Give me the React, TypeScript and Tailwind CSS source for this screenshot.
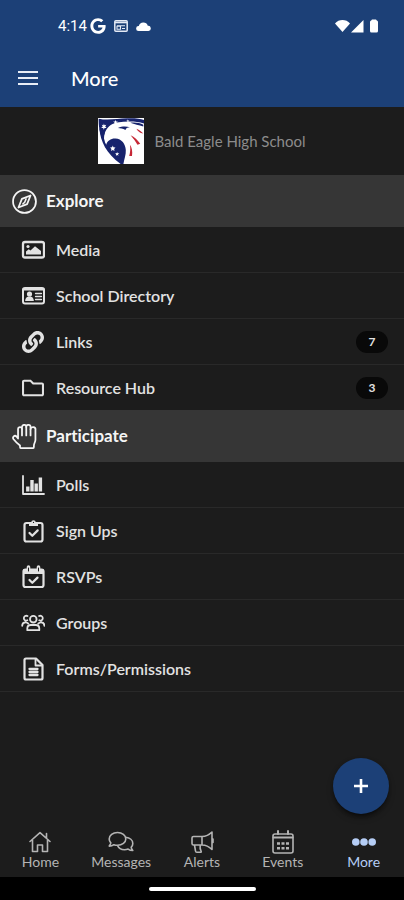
import type { ReactNode } from "react";
import { FaGoogle, FaLink, FaRegFolder } from "react-icons/fa";

type Item = { label: string; icon: ReactNode; count?: number };

function Icon({ size = "w-6 h-6", width = 2, children }: { size?: string; width?: number; children: ReactNode }) {
  return (
    <svg viewBox="0 0 24 24" className={`${size} shrink-0`} fill="none" stroke="currentColor" strokeWidth={width} strokeLinecap="round" strokeLinejoin="round" aria-hidden="true">
      {children}
    </svg>
  );
}

const EXPLORE: Item[] = [
  {
    label: "Media",
    icon: (
      <Icon width={2.3}>
        <rect x="2" y="4" width="21" height="15.5" rx="2" />
        <circle cx="7" cy="8.5" r="1.6" fill="currentColor" stroke="none" />
        <path d="M5 16.500v-3l2.700-2.300 1.800 1.300L14 8.200l6 4.800v3.500z" fill="currentColor" stroke="none" />
      </Icon>
    ),
  },
  {
    label: "School Directory",
    icon: (
      <Icon>
        <rect x="2" y="4" width="21" height="15.5" rx="2" />
        <path d="M2 5.5h21" />
        <circle cx="8.5" cy="10" r="2.6" fill="currentColor" stroke="none" />
        <path d="M4.200 17c0-3.300 1.900-4.500 4.300-4.500s4.300 1.200 4.300 4.500z" fill="currentColor" stroke="none" />
        <path d="M14.5 9.5h6M14.5 12.5h6M14.5 15.5h6" strokeWidth="1.3" />
      </Icon>
    ),
  },
  { label: "Links", icon: <FaLink className="w-6 h-[22px] shrink-0" />, count: 7 },
  { label: "Resource Hub", icon: <FaRegFolder className="w-6 h-[22px] shrink-0" />, count: 3 },
];

const PARTICIPATE: Item[] = [
  {
    label: "Polls",
    icon: (
      <Icon>
        <path d="M2 3v18h21" strokeWidth="1.8" />
        <path d="M6.800 18.500v-5M11 18.500V7M15.200 18.500v-8M19.400 18.500V4.500" strokeWidth="3.400" strokeLinecap="butt" />
      </Icon>
    ),
  },
  {
    label: "Sign Ups",
    icon: (
      <Icon width={2.2}>
        <rect x="3.5" y="4" width="18" height="18.5" rx="2" />
        <path d="M8 7V4.2h2.2a2.3 2.3 0 0 1 4.6 0H17V7z" fill="currentColor" stroke="none" />
        <circle cx="12.5" cy="3.4" r="1.4" fill="#1c1c1c" strokeWidth="1.6" />
        <path d="m8.5 14 2.8 2.8 5.4-5.4" />
      </Icon>
    ),
  },
  {
    label: "RSVPs",
    icon: (
      <Icon width={2.2}>
        <rect x="2.5" y="4.5" width="20" height="17.5" rx="2" />
        <path d="M2.5 4h20v5h-20z" fill="currentColor" stroke="none" />
        <path d="M7.500 2v3.500M17.500 2v3.500" strokeWidth="3.6" />
        <path d="M7.500 3v3M17.500 3v3" stroke="#1c1c1c" strokeWidth="1" />
        <path d="m8.500 15 2.8 2.8 5.2-5.2" />
      </Icon>
    ),
  },
  {
    label: "Groups",
    icon: (
      <Icon width={1.8}>
        <circle cx="12.3" cy="8.2" r="3.3" />
        <path d="M6.3 19.2v-1.7c0-2.3 1.6-3.5 3.5-3.5h5c2 0 3.5 1.2 3.5 3.5v1.7z" />
        <path d="M6.3 9.3a2.4 2.4 0 1 1 .2-4.2M18.3 9.3a2.4 2.4 0 1 0-.2-4.2M1.2 14.8c0-2.4 1.2-3.4 3.3-3.4 1.3 0 2.2.4 2.8 1.2M23.4 14.8c0-2.4-1.2-3.4-3.3-3.4-1.3 0-2.2.4-2.8 1.2" />
      </Icon>
    ),
  },
  {
    label: "Forms/Permissions",
    icon: (
      <Icon width={2.2}>
        <path d="M3.500 3c0-1 .5-1.500 1.500-1.500H15l6.500 6.500v13c0 1-.5 1.500-1.500 1.500H5c-1 0-1.500-.5-1.500-1.500z" />
        <path d="M14.5 2v6.500H21" strokeWidth="1.8" />
        <path d="M8.500 12h8M8.500 15h8M8.500 18h8" strokeWidth="2.3" />
      </Icon>
    ),
  },
];

const TABS: Item[] = [
  {
    label: "Home",
    icon: (
      <Icon width={1.6}>
        <path d="m2 11.5 10-8.8 10 8.8M4.5 10v11.5h5V15h5v6.5h5V10M18.5 8V3.5" />
      </Icon>
    ),
  },
  {
    label: "Messages",
    icon: (
      <svg viewBox="0 0 28 24" className="w-7 h-6" fill="none" stroke="currentColor" strokeWidth="1.6" strokeLinejoin="round" aria-hidden="true">
        <path d="M10.500 2.500c4.700 0 8.300 2.900 8.300 6.400s-3.600 6.400-8.300 6.400c-1.300 0-2.500-.2-3.600-.6-1.100.8-2.700 1.400-4.700 1.400.9-1 1.500-2.200 1.600-3.200-1-1.100-1.600-2.500-1.600-4 0-3.500 3.600-6.400 8.300-6.400z" />
        <path d="M18.800 7.200c4 .5 7 3 7 6.200 0 1.500-.6 2.800-1.600 3.900.1 1 .7 2.200 1.600 3.200-2 0-3.600-.6-4.700-1.400-1.100.4-2.300.6-3.600.6-3.200 0-5.900-1.600-7-4.200" />
      </svg>
    ),
  },
  {
    label: "Alerts",
    icon: (
      <Icon width={1.6}>
        <path d="M12 6.500H3.500A1.500 1.500 0 0 0 2 8v5.500A1.500 1.500 0 0 0 3.500 15H12M12 6.500V15M12 6.500c4 0 7-1.500 10-4.500v17.500C19 16.500 16 15 12 15M4.500 15l1 6c.1.800.6 1.300 1.300 1.300h3.600c.8 0 1.100-.7.600-1.500-.8-1.300-1.200-2.800-.8-5.800M23 9v3.500" />
      </Icon>
    ),
  },
  {
    label: "Events",
    icon: (
      <Icon width={1.6}>
        <rect x="2" y="4" width="20" height="19" rx="2" />
        <path d="M2.500 7.500h19M7 1v3M17 1v3" strokeWidth="2" />
        <path d="M6 13.500h3M10.500 13.500h3M15 13.500h3M6 18.200h3M10.500 18.200h3M15 18.200h3" strokeWidth="2.600" strokeLinecap="butt" />
      </Icon>
    ),
  },
  {
    label: "More",
    icon: (
      <Icon>
        <g fill="currentColor" stroke="none">
          <circle cx="3.800" cy="12" r="3.800" />
          <circle cx="12" cy="12" r="3.800" />
          <circle cx="20.200" cy="12" r="3.800" />
        </g>
      </Icon>
    ),
  },
];

function StatusBar() {
  return (
    <div className="h-[52px] pl-[58px] pr-[22px] flex items-center justify-between">
      <div className="flex items-center gap-2">
        <div className="flex items-center gap-[3px]">
          <span className="font-['Roboto'] text-[15px]">4:14</span>
          <FaGoogle className="w-4 h-4" />
        </div>
        <svg viewBox="0 0 14 12" className="w-3.5 h-3" aria-hidden="true">
          <rect x="0.800" y="0.800" width="12.400" height="10.400" rx="1" fill="none" stroke="#e4eaf5" strokeWidth="1.500" />
          <path d="M1 2.500h12" stroke="#e4eaf5" strokeWidth="1.600" />
          <path d="M3 5.800h8M3 6.200h3.500v3H3zM8 8.500h3" stroke="#e4eaf5" strokeWidth="1.100" fill="none" />
        </svg>
        <svg viewBox="0 0 15 9" className="w-[15px] h-[9px]" aria-hidden="true">
          <path d="M2.500 9a2.500 2.500 0 0 1 .3-5 4.700 4.700 0 0 1 9-.2A2.600 2.600 0 0 1 12.500 9z" fill="#fff" />
        </svg>
      </div>
      <svg viewBox="0 0 48 14" className="w-12 h-3.5" fill="#fff" aria-hidden="true">
        <path d="M1 4.500C4.800-.1 12.200-.1 16 4.500L8.500 13z" />
        <path d="M17 13.500 29.500 1v12.500z" />
        <path d="M36 3q0-1.200 1.200-1.500L38 .6h4l.8.900Q44 1.800 44 3v9q0 1.500-1.500 1.500h-5Q36 13.500 36 12z" />
      </svg>
    </div>
  );
}

function SchoolLogo() {
  return (
    <svg viewBox="0 0 134 134" className="w-[46px] h-[46px]" role="img" aria-label="Bald Eagle High School logo">
      <path d="M0 0h134v134H0z" fill="#fff" />
      <path d="M2 2C34 9 62-1 94 1c18 0 30 2 40 5v10C108 8 82 10 55 13 36 17 26 29 20 43c-5 12-2 25 2 35C7 58 1 27 2 2z" fill="#17236d" />
      <path d="M58 29c13-6 25-5 35-2-8 1-12 3-13 8-8-5-14-5-22-6zM94 14c14-2 28 0 38 6v5c-13-5-26-6-38-11z" fill="#17236d" />
      <path d="M4 30c3 38 20 74 62 104h8c2-14 8-27 7-41-1-17-12-32-30-33-12-1-24 6-27 18C16 66 16 54 20 42z" fill="#17236d" />
      <path d="M95 50c11 5 21 14 28 25l-8 3C110 68 103 60 95 50zM112 31c9 4 15 8 20 14l-7-1c-5-3-10-7-13-13zM93 78c6 8 8 20 6 33h-8c3-11 4-22 2-33z" fill="#c62735" />
      <g fill="#fff">
        <path d="m17 16 2 5 5-1-3 5 4 4-6 0-2 5-2-5-6 0 5-4-3-5 5 1zM51 6l2 4h5l-4 3 1 4-4-2-4 2 1-4-4-3h5zM87 4l1 3h4l-3 2 1 3-3-2-3 2 1-3-3-2h4z" />
        <path d="m43 80 2 5 6 1-4 4 1 6-5-3-5 3 1-6-4-4 6-1zM56 99l1 4h5l-4 3 2 4-4-2-4 2 1-4-3-3h4z" />
      </g>
    </svg>
  );
}

function Section({ title, icon, items }: { title: string; icon: ReactNode; items: Item[] }) {
  return (
    <section>
      <h2 className="h-[52px] px-3 flex items-center gap-[9px] bg-[#363636] text-[17px] font-bold text-[#f5f5f5]">
        {icon}
        {title}
      </h2>
      <ul className="divide-y divide-[#292929]">
        {items.map((item) => (
          <li key={item.label}>
            <a href="#" className="h-[45px] pl-[21px] pr-4 flex items-center gap-[11px] text-[16px] font-semibold text-[#e2e2e2]">
              {item.icon}
              <span className="flex-1">{item.label}</span>
              {item.count && (
                <span className="w-8 h-[22px] rounded-full bg-[#090909] flex items-center justify-center text-[12px] font-bold">
                  {item.count}
                </span>
              )}
            </a>
          </li>
        ))}
      </ul>
    </section>
  );
}

export default function App() {
  return (
    <div className="min-h-screen flex flex-col bg-[#1c1c1c] font-['Lato',sans-serif] [font-variant-ligatures:none]">
      <header className="pb-1 bg-[#1c4077] text-white">
        <StatusBar />
        <div className="h-[51px] px-[18px] flex items-center gap-[33px]">
          <button type="button" aria-label="Open menu">
            <svg viewBox="0 0 20 14" className="w-5 h-3.5" stroke="#e8edf6" strokeWidth="2" aria-hidden="true">
              <path d="M0 1h20M0 7h20M0 13h20" />
            </svg>
          </button>
          <h1 className="text-[20px] font-medium">More</h1>
        </div>
      </header>

      <main className="flex-1">
        <div className="h-[68px] flex items-center justify-center gap-[10px] text-[15px] text-[#8c8c8c]">
          <SchoolLogo />
          Bald Eagle High School
        </div>

        <Section
          title="Explore"
          items={EXPLORE}
          icon={
            <Icon size="w-[25px] h-[25px]" width={1.7}>
              <circle cx="12" cy="12" r="11" />
              <path d="m17.800 6.200-3.300 8.300-8.300 3.300 3.300-8.300z" />
              <path d="m13.500 9.500-1.300 3.200-1.700 1.600" strokeWidth="1.500" />
            </Icon>
          }
        />
        <Section
          title="Participate"
          items={PARTICIPATE}
          icon={
            <Icon size="w-[25px] h-[25px]" width={1.7}>
              <path d="M5.800 14V5.200a1.900 1.900 0 0 1 3.800-.4V3a2 2 0 0 1 4.100-.2A2 2 0 0 1 17.800 3v2a2 2 0 0 1 4.700.8V15c0 2.500-1.500 3.500-1.500 6v1c0 .8-.5 1.200-1.200 1.200H9c-.8 0-1.300-.4-1.300-1.200v-1.300c-2-1.500-4.200-3.500-6.200-6-1.500-2.200 1-4.500 2.800-2.700z" />
              <path d="M9.600 5v6M13.700 3v8M17.800 5v6" />
            </Icon>
          }
        />
        <div className="h-px bg-[#292929]" />
      </main>

      <footer className="sticky bottom-0 bg-[#1c1c1c]">
        <button type="button" aria-label="Add" className="absolute right-[15px] bottom-[86px] w-[56px] h-[56px] rounded-full bg-[#1c4077] shadow-md shadow-black/50 flex items-center justify-center">
          <svg viewBox="0 0 14 14" className="w-3.5 h-3.5" stroke="#fff" strokeWidth="2.600" aria-hidden="true">
            <path d="M7 0v14M0 7h14" />
          </svg>
        </button>
        <nav className="h-[50px] grid grid-cols-5">
          {TABS.map((tab) => (
            <a
              key={tab.label}
              href="#"
              aria-current={tab.label === "More" ? "page" : undefined}
              className={`flex flex-col items-center pt-[3px] text-[14px] leading-4 ${tab.label === "More" ? "text-[#b5cdf5]" : "text-[#b4b4b4]"}`}
            >
              {tab.icon}
              {tab.label}
            </a>
          ))}
        </nav>
        <div className="h-[23px] bg-black flex items-center justify-center">
          <div className="w-[107px] h-1 rounded-full bg-white" />
        </div>
      </footer>
    </div>
  );
}
